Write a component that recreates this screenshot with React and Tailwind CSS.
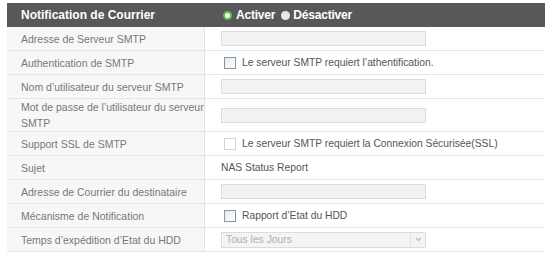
import React from 'react'

const labelCls =
  'flex items-center border-r border-[#e2e2e2] bg-[#f7f7f7] pl-[14px] pr-0 text-[10.5px] leading-4 text-[#777]'
const valueCls = 'flex items-center pl-[16px] text-[10.3px] text-[#555]'
const inputCls = 'h-[15px] w-[205px] border border-[#dcdcdc] bg-[#f2f2f2]'

function Checkbox({ disabled }) {
  return (
    <span
      className={`ml-[3px] mr-[6px] inline-block h-[12px] w-[12px] border ${
        disabled ? 'border-[#d4d4d4] bg-white' : 'border-[#8797a8] bg-gradient-to-br from-[#e6eaee] to-white'
      }`}
    />
  )
}

function Row({ label, children, tall }) {
  return (
    <div className={`grid grid-cols-[198px_1fr] border-b border-[#e6e6e6] ${tall ? 'h-[33px]' : 'h-[24px]'}`}>
      <div className={labelCls}>{label}</div>
      <div className={valueCls}>{children}</div>
    </div>
  )
}

export default function App() {
  return (
    <div className="bg-white pl-[7px] pt-[3px]" style={{ fontFamily: '"Liberation Sans", Arial, sans-serif' }}>
      <div className="w-[538px]">
        <div className="grid h-[24px] grid-cols-[198px_1fr] bg-[#585858] text-[12px] font-bold text-white">
          <div className="flex items-center pl-[14px]">Notification de Courrier</div>
          <div className="flex items-center pl-[18px] tracking-[-0.2px]">
            <span className="mr-[4px] inline-block h-[9px] w-[9px] rounded-full border-[2px] border-[#5cc24a] bg-white" />
            <span>Activer</span>
            <span className="ml-[6px] mr-[3px] inline-block h-[9px] w-[9px] rounded-full bg-[#e8e8e8]" />
            <span>Désactiver</span>
          </div>
        </div>
        <Row label="Adresse de Serveur SMTP"><div className={inputCls} /></Row>
        <Row label="Authentication de SMTP">
          <Checkbox />
          <span>Le serveur SMTP requiert l’athentification.</span>
        </Row>
        <Row label="Nom d’utilisateur du serveur SMTP"><div className={inputCls} /></Row>
        <Row label="Mot de passe de l’utilisateur du serveur SMTP" tall><div className={inputCls} /></Row>
        <Row label="Support SSL de SMTP">
          <Checkbox disabled />
          <span>Le serveur SMTP requiert la Connexion Sécurisée(SSL)</span>
        </Row>
        <Row label="Sujet"><span>NAS Status Report</span></Row>
        <Row label="Adresse de Courrier du destinataire"><div className={inputCls} /></Row>
        <Row label="Mécanisme de Notification">
          <Checkbox />
          <span>Rapport d’Etat du HDD</span>
        </Row>
        <Row label="Temps d’expédition d’Etat du HDD">
          <div className="flex h-[16px] w-[205px] items-center justify-between border border-[#dcdcdc] bg-[#f4f4f4] pl-[4px] text-[#b0b0b0]">
            <span>Tous les Jours</span>
            <span className="flex h-[14px] w-[15px] items-center justify-center border-l border-[#e2e2e2]">
              <svg width="7" height="5" viewBox="0 0 7 5">
                <path d="M1 1 L3.5 3.5 L6 1" fill="none" stroke="#bbb" strokeWidth="1.2" />
              </svg>
            </span>
          </div>
        </Row>
      </div>
    </div>
  )
}
